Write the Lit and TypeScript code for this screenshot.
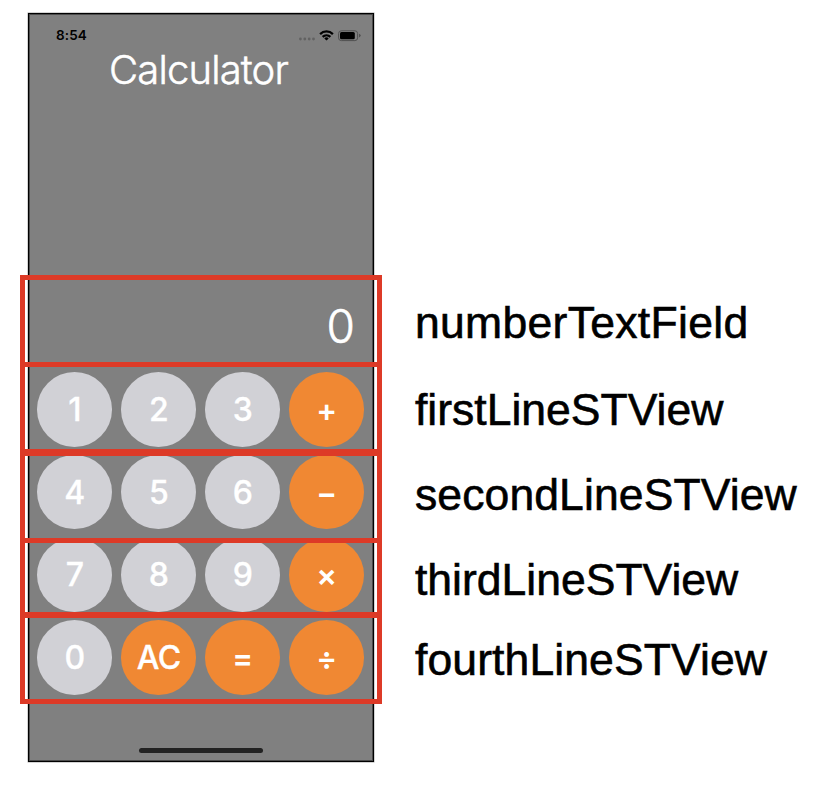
import { LitElement, html, css } from "lit";
import { customElement, property } from "lit/decorators.js";

interface Key {
  label: string;
  kind: "digit" | "action" | "operator";
}

const digit = (label: string): Key => ({ label, kind: "digit" });
const operator = (label: string): Key => ({ label, kind: "operator" });

const ROWS: Key[][] = [
  [digit("1"), digit("2"), digit("3"), operator("+")],
  [digit("4"), digit("5"), digit("6"), operator("−")],
  [digit("7"), digit("8"), digit("9"), operator("×")],
  [digit("0"), { label: "AC", kind: "action" }, operator("="), operator("÷")],
];

@customElement("status-bar")
class StatusBar extends LitElement {
  static styles = css`
    :host {
      display: flex;
      align-items: center;
      justify-content: space-between;
      height: 20px;
      padding: 0 12px 0 27px;
      font: 600 13.5px/20px Inter, sans-serif;
      color: #000;
    }
    .time { letter-spacing: 0.1px; }
    .icons { display: block; }
  `;
  render() {
    return html`
      <span class="time">8:54</span>
      <svg class="icons" width="63" height="14" viewBox="298 28 63 14">
        <g fill="#626262">
          <circle cx="300.4" cy="39" r="1.4" />
          <circle cx="304.8" cy="39" r="1.4" />
          <circle cx="309.2" cy="39" r="1.4" />
          <circle cx="313.5" cy="39" r="1.4" />
        </g>
        <g fill="none" stroke="#000" stroke-width="2.2">
          <path d="M320.1 34.1a9.1 9.1 0 0 1 12.8 0" />
          <path d="M322.6 36.9a5.6 5.6 0 0 1 7.8 0" />
        </g>
        <path d="M326.5 40.6l-2.2-2.2a3.2 3.2 0 0 1 4.4 0z" />
        <rect x="338.6" y="30.8" width="19" height="9.8" rx="2.7" fill="none" stroke="#505050" stroke-width="1" />
        <rect x="340" y="32.1" width="14.8" height="7.2" rx="1.5" />
        <path d="M359 33.8q1.7 0.5 1.7 1.8t-1.7 1.8z" fill="#505050" />
      </svg>
    `;
  }
}

@customElement("key-row")
class KeyRow extends LitElement {
  @property({ attribute: false }) keys: Key[] = [];

  static styles = css`
    :host {
      display: grid;
      grid-template-columns: repeat(4, 75px);
      column-gap: 9px;
    }
    .key {
      display: flex;
      align-items: center;
      justify-content: center;
      height: 74.4px;
      padding: 1px 0 0;
      border: 0;
      border-radius: 50%;
      background: #f08833;
      color: #fff;
      font: 500 32px/1 Inter, sans-serif;
    }
    .digit { background: #d1d1d6; -webkit-text-stroke: 0.3px #fff; }
    .action { -webkit-text-stroke: 0.3px #fff; letter-spacing: -0.5px; }
    .operator { font-size: 31px; font-weight: 600; padding-top: 0; }
  `;
  render() {
    return this.keys.map((k) => html`<button class="key ${k.kind}">${k.label}</button>`);
  }
}

@customElement("app-root")
class AppRoot extends LitElement {
  static styles = css`
    :host {
      position: relative;
      display: flex;
      align-items: flex-start;
      box-sizing: border-box;
      width: 822px;
      height: 788px;
      padding: 13px 0 0 28px;
      background: #fff;
      overflow: hidden;
    }
    .phone {
      display: flex;
      flex-direction: column;
      box-sizing: border-box;
      flex: none;
      width: 346px;
      height: 749px;
      border: 1px solid #000;
      box-shadow: inset 0 0 0 1px #4c4c4c, 0 0 0 0.5px #aaa;
      background: #808080;
      font-family: Inter, sans-serif;
      color: #fff;
    }
    .status { margin-top: 11px; }
    .title {
      margin: 1px 0 0;
      padding-right: 5px;
      font-size: 40px;
      font-weight: 300;
      letter-spacing: -0.85px;
      line-height: 48px;
      text-align: center;
      -webkit-text-stroke: 0.5px #fff;
    }
    .display {
      margin-top: 207px;
      padding-right: 18px;
      font-size: 46px;
      font-weight: 300;
      line-height: 50px;
      text-align: right;
      -webkit-text-stroke: 0.6px #fff;
    }
    .keypad {
      display: grid;
      row-gap: 8.3px;
      padding: 21.2px 0 0 8.3px;
    }
    .home {
      width: 124px;
      height: 5px;
      margin: auto auto 8px;
      border-radius: 3px;
      background: #222;
    }
    .frame {
      position: absolute;
      left: 20px;
      box-sizing: border-box;
      width: 362px;
      border: 5px solid #dd3a27;
    }
    .frame-display { top: 275px; height: 92px; }
    .frame-first { top: 362px; height: 92px; }
    .frame-second { top: 451px; height: 92px; }
    .frame-third { top: 538px; height: 79px; }
    .frame-fourth { top: 613px; height: 91px; }
    .labels {
      display: grid;
      grid-template-rows: 87px 85px 85px 80px 80px;
      padding: 285px 0 0 41px;
      font: 44.5px/50px "Liberation Sans", Arial, sans-serif;
      color: #000;
      white-space: nowrap;
      -webkit-text-stroke: 0.6px #000;
    }
    .label { justify-self: start; }
    .number { letter-spacing: 0.3px; }
    .second, .fourth { letter-spacing: 0.1px; }
  `;
  render() {
    return html`
      <main class="phone">
        <status-bar class="status"></status-bar>
        <h1 class="title">Calculator</h1>
        <div class="display">0</div>
        <div class="keypad">
          ${ROWS.map((keys) => html`<key-row .keys=${keys}></key-row>`)}
        </div>
        <div class="home"></div>
      </main>
      <div class="labels">
        <span class="label number">numberTextField</span>
        <span class="label first">firstLineSTView</span>
        <span class="label second">secondLineSTView</span>
        <span class="label third">thirdLineSTView</span>
        <span class="label fourth">fourthLineSTView</span>
      </div>
      <div class="frame frame-display"></div>
      <div class="frame frame-first"></div>
      <div class="frame frame-second"></div>
      <div class="frame frame-third"></div>
      <div class="frame frame-fourth"></div>
    `;
  }
}
